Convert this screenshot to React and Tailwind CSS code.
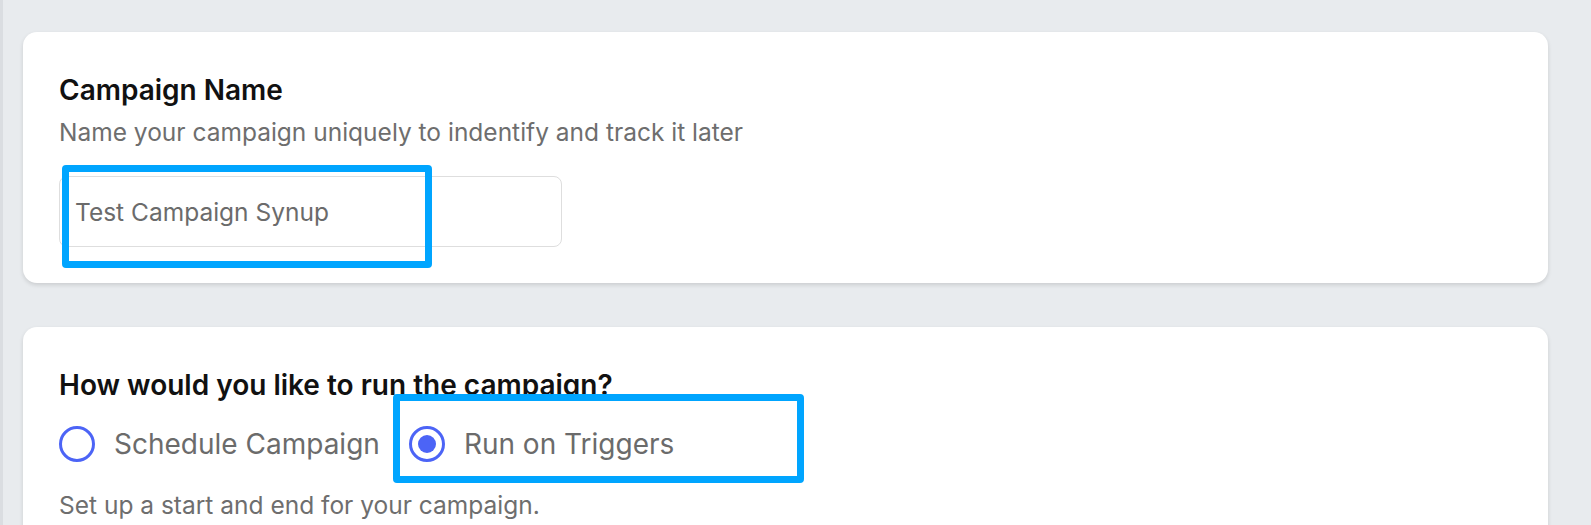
import { useState } from 'react'

function Radio({ checked, label, onSelect }) {
  return (
    <button type="button" onClick={onSelect} className="flex items-center gap-[19px] cursor-pointer">
      <span className="w-[36px] h-[36px] rounded-full border-[3.5px] border-[#4c64f6] flex items-center justify-center shrink-0">
        {checked && <span className="w-[18px] h-[18px] rounded-full bg-[#4c64f6]" />}
      </span>
      <span className="text-[28px] leading-[36px] text-[#6b6b6b]">{label}</span>
    </button>
  )
}

export default function App() {
  const [name, setName] = useState('Test Campaign Synup')
  const [mode, setMode] = useState('triggers')

  return (
    <div
      className="min-h-[525px] h-[525px] overflow-hidden bg-[#e8ebee] border-l-[3px] border-[#dadde1] pl-[20px] pr-[43px] pt-[32px]"
      style={{ fontFamily: 'Inter, "Noto Sans", sans-serif' }}
    >
      {/* Campaign name */}
      <section className="relative bg-white rounded-[14px] shadow-[0_2px_4px_rgba(0,0,0,0.13)] px-[36px] pt-[41px] pb-[36px]">
        <h2 className="text-[28px] leading-[34px] font-semibold text-[#111]">Campaign Name</h2>
        <p className="mt-[9px] text-[24.5px] leading-[32px] text-[#6e6e6e]">
          Name your campaign uniquely to indentify and track it later
        </p>
        <input
          value={name}
          onChange={(e) => setName(e.target.value)}
          className="mt-[28px] block w-[503px] h-[71px] rounded-[8px] border border-[#dedede] px-[15px] text-[24.5px] text-[#6b6b6b] outline-none"
        />
        {/* annotation */}
        <div className="absolute left-[39px] top-[133px] w-[370px] h-[103px] border-[7px] border-[#00a5ff] rounded-[4px] pointer-events-none" />
      </section>

      {/* Run mode */}
      <section className="relative mt-[44px] bg-white rounded-[14px] shadow-[0_2px_4px_rgba(0,0,0,0.13)] px-[36px] pt-[41px] pb-[40px]">
        <h2 className="text-[28px] leading-[34px] font-semibold text-[#111]">How would you like to run the campaign?</h2>
        <div className="mt-[24px] flex items-center gap-[29px]">
          <Radio checked={mode === 'schedule'} label="Schedule Campaign" onSelect={() => setMode('schedule')} />
          <Radio checked={mode === 'triggers'} label="Run on Triggers" onSelect={() => setMode('triggers')} />
        </div>
        <p className="mt-[27px] text-[24.5px] leading-[32px] text-[#6e6e6e]">Set up a start and end for your campaign.</p>
        {/* annotation */}
        <div className="absolute left-[370px] top-[67px] w-[411px] h-[89px] border-[7px] border-[#00a5ff] rounded-[4px] pointer-events-none" />
      </section>
    </div>
  )
}
